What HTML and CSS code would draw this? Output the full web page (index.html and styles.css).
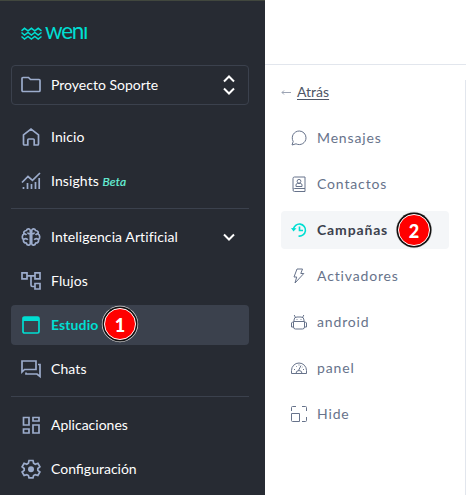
FILE: index.html
```html
<!DOCTYPE html>
<html lang="es">
<head>
<meta charset="utf-8">
<title>Weni</title>
<link rel="stylesheet" href="styles.css">
</head>
<body>
<div class="app">
  <aside class="sidebar">
    <div class="logo">
      <svg width="21" height="13" viewBox="0 0 21 13"><path d="M.5 3.800l3-2.500L7 3.800l3.400-2.500 3.400 2.500 3.400-2.500 3.300 2.500M.500 5.500l3 2.500L7 5.500l3.400 2.500 3.400-2.500 3.400 2.500 3.300-2.500M.500 9.500l3 2.500L7 9.500l3.400 2.500 3.400-2.500 3.400 2.500 3.300-2.500"/></svg>
      <span class="wordmark">wenı</span>
    </div>
    <div class="project">
      <svg class="icon" viewBox="0 0 20 20"><path d="M1 15.500v-12Q1 2.500 2 2.500h5.500l2 2H18Q19 4.500 19 5.500v10Q19 16.500 18 16.500H2Q1 16.500 1 15.500z"/></svg>
      <span class="label">Proyecto Soporte</span>
      <svg class="sorter" width="14" height="20" viewBox="0 0 14 20"><path d="M2 6.500l5-5 5 5M2 13.500l5 5 5-5"/></svg>
    </div>
    <nav class="menu">
      <a class="item"><svg class="icon" viewBox="0 0 20 20"><path d="M2.500 17V7.800L10 2l7.500 5.800V17q0 1-1 1h-3.300v-5q0-1-1-1H7.800q-1 0-1 1v5H3.500q-1 0-1-1z"/></svg><span class="wide">Inicio</span></a>
      <a class="item"><svg class="icon" viewBox="0 0 20 20"><path d="M1 11.500l6-6 4.500 3.800L19 2M2.500 18v-2M6.500 18v-6M10.500 18v-5M14.500 18v-7M18.200 18V7"/></svg><span class="wide">Insights <em>Beta</em></span></a>
      <hr>
      <a class="item"><svg class="icon" viewBox="0 0 20 20"><path d="M9.300 3.200C8.500 1.200 5.800 1.500 5.500 3.500 3 3.500 2.300 5.700 3 7 .800 8 .800 11.500 2.500 12.500 2 14.800 3.300 16 5.300 16c.500 2.500 3.500 3 4 .800zM10.700 3.200c.800-2 3.500-1.700 3.800.300 2.500 0 3.200 2.200 2.500 3.500 2.200 1 2.200 4.500.500 5.500.500 2.300-.800 3.500-2.800 3.500-.500 2.500-3.500 3-4 .800zM3 7q1.500-.500 2.500 1M6.500 5.500q.500 1.500 2.500 1.500M2.800 12.300q2.500-1.500 4 .500M17 7q-1.500-.500-2.500 1M13.500 5.500Q13 7 11 7M17.200 12.300q-2.500-1.500-4 .500"/></svg><span class="wide">Inteligencia Artificial</span><svg class="chevron" width="14" height="10" viewBox="0 0 14 10"><path d="M2 2.500l5 5 5-5"/></svg></a>
      <a class="item"><svg class="icon" viewBox="0 0 20 20"><path d="M1 1.800h5v6H1zM14 1.800h5v6h-5zM14 12.500h5v5.500h-5zM6 4.800h8M10 4.800V14q0 1.500 1.500 1.500H14"/></svg><span class="wide">Flujos</span></a>
      <a class="item active"><svg class="icon" viewBox="0 0 20 20"><rect x="2" y="2" width="16" height="16" rx="1.500"/><path class="solid" d="M2 2h16v4H2z"/></svg><span class="wide">Estudio</span><b class="badge step-one">1</b></a>
      <a class="item"><svg class="icon" viewBox="0 0 20 20"><path d="M1 13V2h14v8.500H3.500zM5 13.500V15h11l3 2.500V5.500h-2"/></svg><span class="wide">Chats</span></a>
      <hr>
      <a class="item"><svg class="icon" viewBox="0 0 20 20"><path d="M2.500 2.500H8V10H2.500zM12 2.500h6v3.500h-6zM12 10h6v8h-6zM2.500 14H8v4H2.500z"/></svg><span>Aplicaciones</span></a>
      <a class="item"><svg class="icon" viewBox="0 0 20 20"><path d="M8 1.500h4l.600 2.700 1.700 1 2.600-.900 2 3.500L16.800 9.500v1.800l2.100 1.700-2 3.500-2.600-.900-1.700 1L12 18.800H8l-.600-2.200-1.700-1-2.600.900-2-3.500 2.100-1.700V9.500L1.100 7.800l2-3.500 2.600.900 1.700-1z"/><circle class="solid" cx="10" cy="10.200" r="3"/></svg><span>Configuración</span></a>
    </nav>
  </aside>
  <main class="content">
    <header class="topbar"></header>
    <div class="studio">
      <div class="back"><svg width="11" height="8" viewBox="0 0 11 8"><path d="M10 4.500H1M3 2.500l-2 2 2 2"/></svg><a>Atrás</a></div>
      <nav class="options">
        <a class="option"><svg class="glyph" viewBox="0 0 16 16"><path d="M1 15l1.200-3.500C-.500 6.500 3 1 8.300 1A6.800 6.800 0 0 1 15 7.800c0 5.200-5.500 8.300-10 6z"/></svg><span>Mensajes</span></a>
        <a class="option"><svg class="glyph" viewBox="0 0 16 16"><path d="M2 13V2.500Q2 1 3.500 1H14v11.500H3.500Q2 12.500 2 14t1.500 1.500H14M14 12.500v3M5 10.500V9q0-1.500 1.500-1.500h3Q11 7.500 11 9v1.500z"/><circle cx="8" cy="5.300" r="1.900"/></svg><span>Contactos</span></a>
        <a class="option current"><svg class="glyph" viewBox="0 0 16 16"><path d="M2.500 7.500A6 6 0 1 1 7.500 14M8.500 4.500V8.500H12"/><path class="solid" d="M0 6l5.500.300L2.500 9.500z"/></svg><span>Campañas</span><b class="badge step-two">2</b></a>
        <a class="option"><svg class="glyph" viewBox="0 0 16 16"><path d="M6 1h5.500L9.800 5.500h3L4 15l1.700-6H3z"/></svg><span>Activadores</span></a>
        <a class="option"><svg class="glyph" viewBox="0 0 16 16"><path d="M3 7V6q0-3 3-3h4q3 0 3 3v1M2.500 7.500h11v5.500q0 2-2 2h-7q-2 0-2-2zM2.500 8H1.500L.500 9v4h2M13.500 8h1l1 1v4h-2M4.500 3.500L3.200 1M11.500 3.500L12.800 1M6 5v.800M10 5v.800"/></svg><span>android</span></a>
        <a class="option"><svg class="glyph" viewBox="0 0 16 16"><path d="M.500 13.500V10.500a7.500 7.500 0 0 1 15 0v3zM5 13.500q0-3 3-3t3 3M7.500 10.500L10 5.500M3 9.500h1M12 9.500h1M5 6l.700.700M8 4.500v1M11.500 7l-.700.700"/></svg><span>panel</span></a>
        <a class="option"><svg class="glyph" viewBox="0 0 16 16"><path d="M.500 7.500H8.500v8H1.500q-1 0-1-1zM.500 5V1.500q0-1 1-1H5M11 .500h3.500q1 0 1 1V5M15.500 11v3.500q0 1-1 1H11"/></svg><span>Hide</span></a>
      </nav>
    </div>
  </main>
</div>
</body>
</html>
```
FILE: styles.css
```css
* { box-sizing: border-box; }
body { margin: 0; font-family: Lato, sans-serif; font-size: 14px; background: #fff; }
svg { display: block; flex: none; fill: none; stroke: currentColor; }
.app { display: flex; height: 495px; overflow: hidden; }
.sidebar { width: 265px; flex: none; padding: 0 16px 0 11px; background: #272b33; border-top: 1px solid #41473e; color: #fff; }
.logo { display: flex; align-items: center; height: 64px; padding-left: 10px; color: #00ded2; }
.logo svg { stroke-width: 1.5; }
.wordmark { margin: -4px 0 0 3px; font-size: 22.5px; line-height: 28px; letter-spacing: -1.3px; }
.project { display: flex; align-items: center; height: 40px; padding: 0 12px 0 9px; border: 1px solid #3b414d; border-radius: 4px; }
.icon { width: 20px; height: 20px; margin-right: 10px; color: #9caccc; stroke-width: 1.7; }
.label { flex: 1; padding-bottom: 2px; }
.sorter, .chevron { color: #fff; stroke-width: 2; }
.menu { display: flex; flex-direction: column; padding-top: 12px; }
.item { position: relative; display: flex; align-items: center; height: 40px; margin-bottom: 4px; padding: 0 13px 0 10px; border-radius: 4px; }
.item span, .option span { padding-bottom: 2px; }
.item .wide { letter-spacing: 0.1px; }
.item em { font-size: 12px; color: #67f2d9; -webkit-text-stroke: 0.2px currentColor; }
.chevron { margin-left: auto; }
.menu hr { width: 100%; height: 1px; margin: 3px 0 8px; border: 0; background: #3b414d; }
.active { background: #3b414d; color: #00ded2; font-weight: bold; }
.active .icon { color: #00ded2; }
.solid { fill: currentColor; stroke: none; }
.badge { position: absolute; display: flex; align-items: center; justify-content: center; width: 32px; height: 32px; padding-top: 1px; border: 1px solid #fff; border-radius: 50%; background: #f00; box-shadow: 0 0 0 1.5px #111, 0 0 0 2.2px #ddd; color: #fff; font: 900 18px/1 Lato, sans-serif; letter-spacing: 0; }
.step-one { left: 93px; top: 3px; }
.step-two { left: 117px; top: 3px; }
.content { flex: 1; display: flex; flex-direction: column; }
.topbar { height: 65px; border-bottom: 1px solid #e2e6ed; }
.studio { flex: 1; margin-top: 15px; padding: 0 16px; border-right: 1px solid #e2e6ed; }
.back { display: flex; align-items: center; height: 24px; color: #4e5666; }
.back svg { margin-right: 5px; color: #9ca4b4; }
.back a { padding-bottom: 2px; text-decoration: underline; text-underline-offset: 2px; }
.options { display: flex; flex-direction: column; gap: 8px; padding-top: 15px; }
.option { position: relative; display: flex; align-items: center; width: 168px; height: 38px; padding-left: 10px; border-radius: 4px; color: #67738b; letter-spacing: 0.85px; }
.glyph { width: 16px; height: 16px; margin-right: 10px; stroke-width: 1; }
.current { background: #f4f6f8; color: #3b414d; font-weight: bold; }
.current .glyph { color: #00ded2; stroke-width: 1.6; }
```
